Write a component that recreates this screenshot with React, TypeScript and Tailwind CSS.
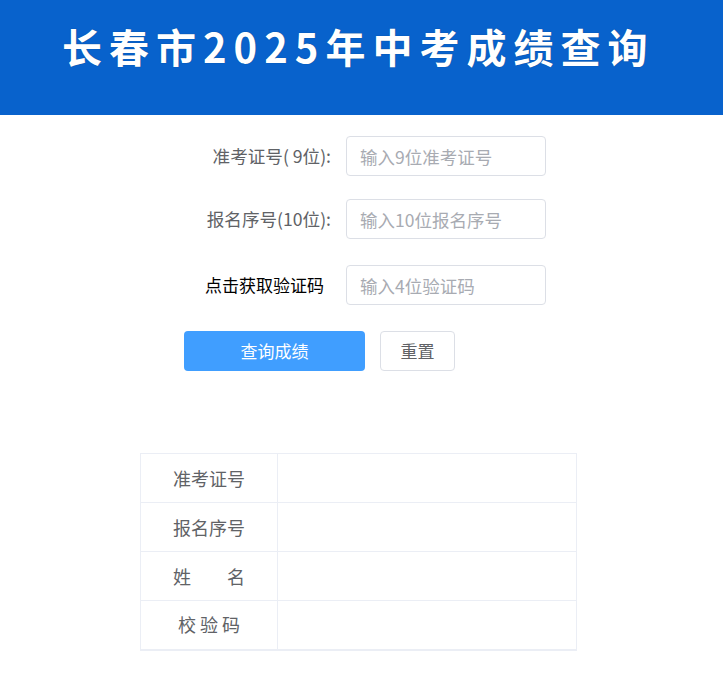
import { useState } from "react";

const fieldRows = [
  { label: "准考证号( 9位):", placeholder: "输入9位准考证号", max: 9 },
  { label: "报名序号(10位):", placeholder: "输入10位报名序号", max: 10 },
];

const resultRows = ["准考证号", "报名序号", "姓\u3000\u3000名", "校 验 码"];

export default function App() {
  const [values, setValues] = useState<string[]>(["", "", ""]);

  const update = (i: number, v: string) => {
    setValues((prev) => prev.map((x, idx) => (idx === i ? v : x)));
  };

  return (
    <div className="min-h-screen bg-white font-['Noto_Sans_CJK_SC',sans-serif]">
      {/* Header */}
      <header className="h-[115px] bg-[#0862cc] pl-[62px] pt-[18px]">
        <h1 className="text-[40px] leading-[56px] font-bold tracking-[7px] text-white [text-shadow:0_0_1px_rgba(0,0,0,0.4)]">
          长春市2025年中考成绩查询
        </h1>
      </header>

      {/* Query form */}
      <div className="flex flex-col pl-[181px] pt-[21px]">
        {fieldRows.map((row, i) => (
          <div key={i} className={`flex items-center ${i === 0 ? "" : "mt-[23px]"}`}>
            <label className="w-[150px] text-right text-[17.6px] text-[#606266]">{row.label}</label>
            <input
              value={values[i]}
              maxLength={row.max}
              onChange={(e) => update(i, e.target.value)}
              placeholder={row.placeholder}
              className="ml-[15px] h-[40px] w-[200px] rounded-[4px] border border-[#dcdfe6] px-[13px] text-[17.5px] text-[#606266] outline-none placeholder:text-[#a8abb2]"
            />
          </div>
        ))}
        <div className="mt-[26px] flex items-center">
          <button className="w-[150px] pr-[7px] text-right text-[17px] text-black">点击获取验证码</button>
          <input
            value={values[2]}
            maxLength={4}
            onChange={(e) => update(2, e.target.value)}
            placeholder="输入4位验证码"
            className="ml-[15px] h-[40px] w-[200px] rounded-[4px] border border-[#dcdfe6] px-[13px] text-[17.5px] text-[#606266] outline-none placeholder:text-[#a8abb2]"
          />
        </div>
        <div className="mt-[26px] flex items-center pl-[3px]">
          <button className="h-[40px] w-[181px] rounded-[4px] bg-[#409eff] text-[17px] text-white">查询成绩</button>
          <button className="ml-[15px] h-[40px] w-[75px] rounded-[4px] border border-[#dcdfe6] bg-white text-[17px] text-[#606266]">
            重置
          </button>
        </div>
      </div>

      {/* Result table */}
      <div className="pl-[140px] pt-[82px]">
        <table className="w-[437px] border-collapse border border-b-2 border-[#ebeef5] text-[18px] text-[#606266]">
          <tbody>
            {resultRows.map((name) => (
              <tr key={name} className="h-[49px]">
                <td className="w-[137px] border border-[#ebeef5] text-center">{name}</td>
                <td className="border border-[#ebeef5]"></td>
              </tr>
            ))}
          </tbody>
        </table>
      </div>
    </div>
  );
}
